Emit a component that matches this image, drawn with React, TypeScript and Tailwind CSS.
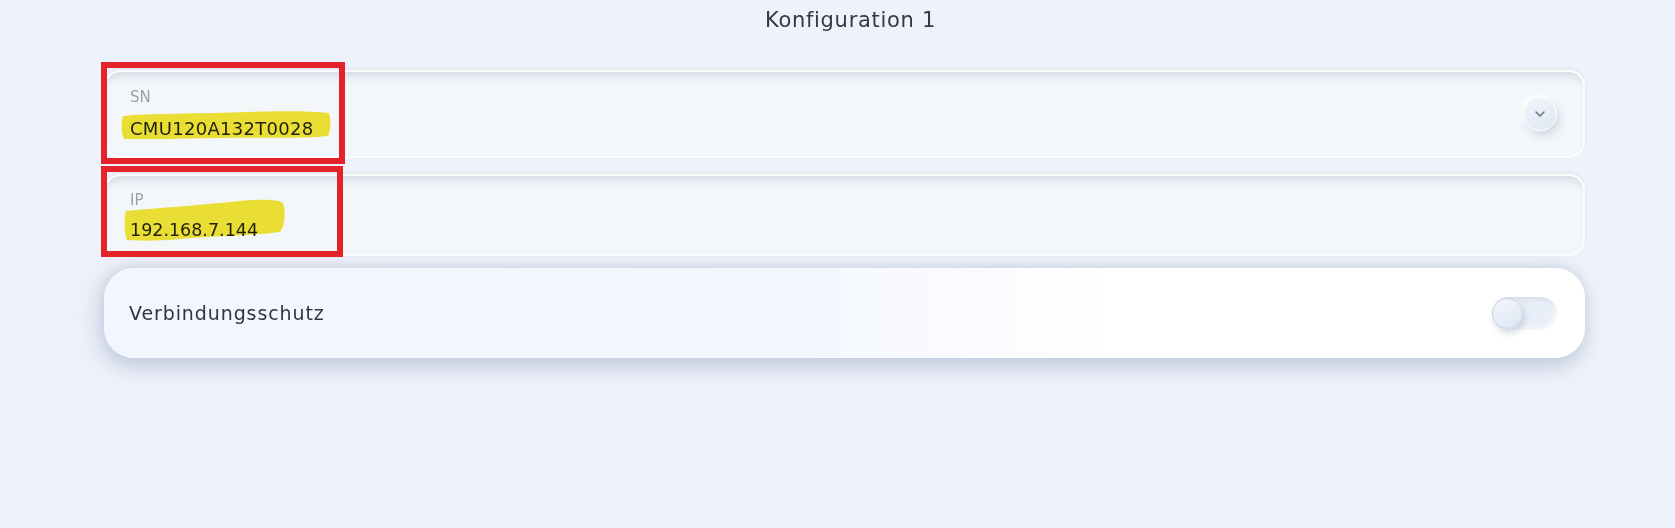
export default function App() {
  return (
    <div className="relative w-[1675px] h-[528px] overflow-hidden bg-[#eef2fa] font-['DejaVu_Sans',sans-serif]">
      {/* Titel */}
      <h1 className="pt-[6px] pl-[116px] pr-[90px] text-center text-[21px] tracking-[0.7px] leading-[28px] text-[#343a46]">
        Konfiguration 1
      </h1>

      <div className="mt-[36px] pl-[104px] pr-[90px] flex flex-col">
        {/* SN */}
        <div className="h-[88px] rounded-[16px] bg-[#f4f7fa] border-2 border-white/80 shadow-[inset_0_9px_10px_-6px_rgba(150,162,185,0.4),0_-1px_3px_rgba(190,200,215,0.35)] pl-[24px] pr-[26px] flex items-center justify-between">
          <div className="flex flex-col">
            <span className="text-[15px] leading-[20px] text-[#9aa1ad]">SN</span>
            <span className="mt-[9px] text-[18px] tracking-[0.3px] leading-[26px] text-[#1f2430]">CMU120A132T0028</span>
          </div>
          <button className="w-[34px] h-[34px] rounded-full flex items-center justify-center bg-[linear-gradient(145deg,#f3f6fb,#dde6f3)] border border-white shadow-[3px_5px_8px_rgba(170,182,205,0.45),-2px_-2px_5px_rgba(255,255,255,0.9)]">
            <svg width="16" height="16" viewBox="0 0 24 24" fill="none" stroke="#6b7280" strokeWidth="2.2" strokeLinecap="round" strokeLinejoin="round">
              <polyline points="6 9 12 15 18 9" />
            </svg>
          </button>
        </div>

        {/* IP */}
        <div className="mt-[16px] h-[82px] rounded-[16px] bg-[#f4f7fa] border-2 border-white/80 shadow-[inset_0_9px_10px_-6px_rgba(150,162,185,0.4),0_-1px_3px_rgba(190,200,215,0.35)] pl-[24px] flex flex-col pt-[14px]">
          <span className="text-[15px] leading-[20px] text-[#9aa1ad]">IP</span>
          <span className="mt-[7px] text-[17.5px] leading-[26px] text-[#1f2430]">192.168.7.144</span>
        </div>

        {/* Verbindungsschutz */}
        <div className="mt-[12px] h-[90px] rounded-[30px] bg-[linear-gradient(90deg,#f3f6fe_0%,#f4f7fe_48%,#ffffff_68%,#ffffff_100%)] shadow-[0_10px_18px_rgba(165,178,205,0.45),-10px_4px_24px_rgba(190,200,220,0.35),0_-4px_10px_rgba(200,210,228,0.5)] pl-[25px] pr-[28px] flex items-center justify-between">
          <span className="text-[19px] tracking-[0.9px] text-[#2f3542]">Verbindungsschutz</span>
          <div className="w-[65px] h-[33px] rounded-full bg-[#e9eff9] shadow-[inset_2px_2px_5px_rgba(170,182,205,0.4),inset_-2px_-2px_4px_rgba(255,255,255,0.9)] flex items-center">
            <div className="w-[31px] h-[31px] rounded-full bg-[linear-gradient(145deg,#f4f7fc,#dbe5f3)] border border-[#cfd8e6] shadow-[2px_4px_6px_rgba(160,172,198,0.45)]" />
          </div>
        </div>
      </div>

      {/* Markierungen */}
      <svg className="absolute left-0 top-0 pointer-events-none mix-blend-multiply" width="1675" height="528">
        <path
          d="M123 116 C150 113 200 114 250 112 C280 111 310 111 329 113 C331 120 331 130 328 136 C300 139 260 137 220 138 C180 139 150 139 124 139 C121 132 121 122 123 116 Z"
          fill="#f5e535"
        />
        <path
          d="M126 211 C160 208 200 205 240 201 C262 199 278 199 283 203 C286 212 285 226 280 232 C250 236 210 236 180 239 C160 241 140 241 127 240 C124 232 124 220 126 211 Z"
          fill="#f5e535"
        />
      </svg>

      {/* rote Rahmen */}
      <div className="absolute left-[101px] top-[62px] w-[244px] h-[102px] border-[6px] border-[#e32229]" />
      <div className="absolute left-[101px] top-[166px] w-[242px] h-[91px] border-[6px] border-[#e32229]" />
    </div>
  )
}
